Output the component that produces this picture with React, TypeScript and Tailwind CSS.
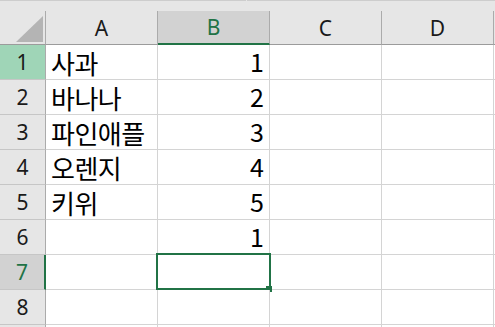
import React from 'react';

const columns = ['A', 'B', 'C', 'D'];

const rows: { a?: string; b?: number }[] = [
  { a: '사과', b: 1 },
  { a: '바나나', b: 2 },
  { a: '파인애플', b: 3 },
  { a: '오렌지', b: 4 },
  { a: '키위', b: 5 },
  { b: 1 },
  {},
  {},
  {},
];

const GREEN = 'border-[#217346]';

function Corner() {
  return (
    <div className="w-[46px] shrink-0 border-r border-b border-r-[#ababab] border-b-[#9b9b9b] pl-[16px] pt-[5px]">
      <svg width="27" height="26" viewBox="0 0 27 26">
        <polygon points="27,0 27,26 0,26" fill="#b4b4b4" />
      </svg>
    </div>
  );
}

function ColumnHeader({ label, active }: { label: string; active?: boolean }) {
  return (
    <div
      className={
        active
          ? `w-[112px] shrink-0 flex items-center justify-center border-r border-r-[#ababab] border-b-2 ${GREEN} bg-[#d2d2d2] text-[#217346]`
          : 'w-[112px] shrink-0 flex items-center justify-center border-r border-r-[#ababab] border-b border-b-[#9b9b9b]'
      }
    >
      <span className="pt-[2px]">{label}</span>
    </div>
  );
}

export default function App() {
  return (
    <div className="w-[495px] h-[327px] overflow-hidden bg-[#e6e6e6] font-['Noto_Sans','Noto_Sans_CJK_KR',sans-serif] text-[21px] text-[#1a1a1a]">
      {/* top strip */}
      <div className="flex h-[11px]">
        <div className="w-[246px] border-t border-[#cdcdcd]" />
        <div className="w-[1px]" />
        <div className="flex-1 border-t border-[#cdcdcd]" />
      </div>

      {/* column headers */}
      <div className="flex h-[34px]">
        <Corner />
        {columns.map((c) => (
          <ColumnHeader key={c} label={c} active={c === 'B'} />
        ))}
        <div className="flex-1 border-b border-b-[#9b9b9b]" />
      </div>

      {/* rows (row 9 only peeks in at the bottom edge) */}
      {rows.map((r, i) => {
        const n = i + 1;
        const headerCls =
          n === 1
            ? 'bg-[#9fd5b7] border-r border-r-[#ababab]'
            : n === 7
              ? `bg-[#d2d2d2] text-[#217346] border-r-2 ${GREEN}`
              : 'border-r border-r-[#ababab]';
        return (
          <div key={n} className="flex h-[35px] shrink-0">
            <div
              className={`w-[46px] shrink-0 flex items-center justify-center border-b border-b-[#c6c6c6] ${headerCls}`}
            >
              {n < 9 && <span className="pt-[2px]">{n}</span>}
            </div>
            <div className="w-[112px] shrink-0 bg-white border-r border-b border-[#d4d4d4] flex items-end pl-[5px] pb-[3px] font-['Noto_Sans_CJK_KR',sans-serif] text-[26px] tracking-[-0.5px] text-black leading-none whitespace-nowrap">
              {r.a}
            </div>
            <div className="relative w-[112px] shrink-0 bg-white border-r border-b border-[#d4d4d4] flex items-end justify-end pr-[5px] pb-[5px] font-['Noto_Sans_CJK_KR',sans-serif] text-[25px] text-black leading-none">
              {r.b}
              {n === 7 && (
                <>
                  <div className={`absolute -left-[2px] -top-[2px] w-[115px] h-[37px] border-2 ${GREEN}`} />
                  <div className="absolute left-[108px] top-[31px] w-[6px] h-[6px] bg-[#217346]" />
                </>
              )}
            </div>
            <div className="w-[112px] shrink-0 bg-white border-r border-b border-[#d4d4d4]" />
            <div className="w-[112px] shrink-0 bg-white border-r border-b border-[#d4d4d4]" />
            <div className="flex-1 bg-white border-b border-[#d4d4d4]" />
          </div>
        );
      })}
    </div>
  );
}
